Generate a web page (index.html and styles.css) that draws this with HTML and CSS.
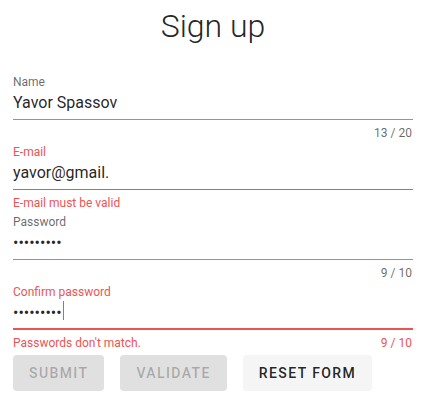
FILE: index.html
```html
<!DOCTYPE html>
<html lang="en">
<head>
<meta charset="utf-8">
<title>Sign up</title>
<link rel="stylesheet" href="styles.css">
</head>
<body>
<div class="page">
  <h1 class="title">Sign up</h1>
  <form class="form">
    <div class="field">
      <div class="label">Name</div>
      <div class="input">Yavor Spassov</div>
      <div class="details"><span class="msg"></span><span class="counter">13 / 20</span></div>
    </div>
    <div class="field error">
      <div class="label">E-mail</div>
      <div class="input">yavor@gmail.</div>
      <div class="details"><span class="msg">E-mail must be valid</span><span class="counter"></span></div>
    </div>
    <div class="field">
      <div class="label">Password</div>
      <div class="input"><span class="dots">•••••••••</span></div>
      <div class="details"><span class="msg"></span><span class="counter">9 / 10</span></div>
    </div>
    <div class="field error focused">
      <div class="label">Confirm password</div>
      <div class="input"><span class="dots">•••••••••</span><span class="caret"></span></div>
      <div class="details"><span class="msg">Passwords don't match.</span><span class="counter">9 / 10</span></div>
    </div>
    <div class="actions">
      <button type="button" class="btn" disabled>Submit</button>
      <button type="button" class="btn" disabled>Validate</button>
      <button type="button" class="btn">Reset form</button>
    </div>
  </form>
</div>
</body>
</html>
```

FILE: styles.css
```css
* { box-sizing: border-box; }
html, body { margin: 0; padding: 0; background: #fff; }
body {
  font-family: Roboto, "Noto Sans", sans-serif;
  color: rgba(0, 0, 0, 0.87);
}
.page {
  width: 400px;
  margin-left: 13px;
}
.title {
  margin: 6px 0 0;
  font-size: 32px;
  line-height: 40px;
  font-weight: 300;
  text-align: center;
  letter-spacing: 0;
  color: rgba(0, 0, 0, 0.87);
}
.form {
  margin-top: 29px;
  display: flex;
  flex-direction: column;
}
.field {
  display: flex;
  flex-direction: column;
  margin-bottom: 5px;
}
.label {
  font-size: 12px;
  line-height: 14px;
  height: 14px;
  color: rgba(0, 0, 0, 0.6);
}
.input {
  margin-top: 4px;
  font-size: 16px;
  line-height: 20px;
  height: 27px;
  padding-bottom: 6px;
  border-bottom: 1px solid rgba(0, 0, 0, 0.42);
  color: rgba(0, 0, 0, 0.87);
  display: flex;
  align-items: flex-start;
}
.dots {
  font-size: 16px;
  letter-spacing: 0;
}
.caret {
  display: inline-block;
  width: 1px;
  height: 19px;
  margin-top: -2px;
  margin-left: 1px;
  background: #ec5454;
}
.details {
  margin-top: 6px;
  display: flex;
  justify-content: space-between;
  font-size: 12px;
  line-height: 14px;
  height: 14px;
  color: rgba(0, 0, 0, 0.6);
  padding-right: 1px;
}
.error .label,
.error .details { color: #ec5454; }
.error .input { border-bottom-color: #ec5454; }
.focused .input {
  padding-bottom: 5px;
  border-bottom-width: 2px;
}
.field:last-of-type { margin-bottom: 1px; }
.actions {
  display: flex;
  gap: 16px;
}
.btn {
  height: 36px;
  min-width: 64px;
  padding: 0 16px;
  border: 0;
  border-radius: 4px;
  background: #f5f5f5;
  color: rgba(0, 0, 0, 0.87);
  font-family: Roboto, "Noto Sans", sans-serif;
  font-size: 14px;
  font-weight: 500;
  letter-spacing: 1.4px;
  text-transform: uppercase;
}
.btn:disabled {
  background: #e0e0e0;
  color: rgba(0, 0, 0, 0.26);
}
```
